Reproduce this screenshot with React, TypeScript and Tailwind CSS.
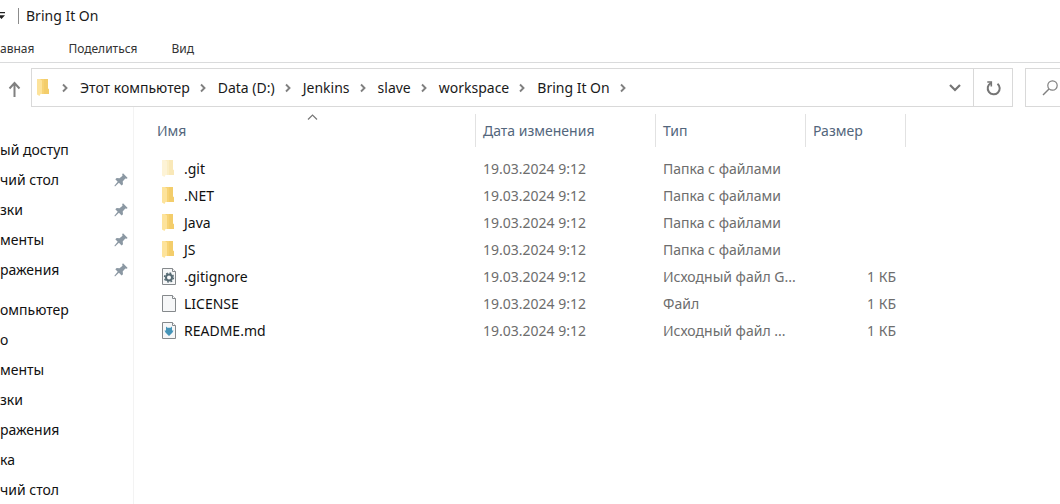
import type { ReactNode } from "react";

type Kind = "hidden" | "folder" | "gear" | "blank" | "markdown";
type Entry = { name: string; kind: Kind; type: string; size?: string };

const entries: Entry[] = [
  { name: ".git", kind: "hidden", type: "Папка с файлами" },
  { name: ".NET", kind: "folder", type: "Папка с файлами" },
  { name: "Java", kind: "folder", type: "Папка с файлами" },
  { name: "JS", kind: "folder", type: "Папка с файлами" },
  { name: ".gitignore", kind: "gear", type: "Исходный файл G...", size: "1 КБ" },
  { name: "LICENSE", kind: "blank", type: "Файл", size: "1 КБ" },
  { name: "README.md", kind: "markdown", type: "Исходный файл ...", size: "1 КБ" },
];

const crumbs = ["Этот компьютер", "Data (D:)", "Jenkins", "slave", "workspace", "Bring It On"];

const quickAccess = [
  { label: "ый доступ", pinned: false },
  { label: "чий стол", pinned: true },
  { label: "зки", pinned: true },
  { label: "менты", pinned: true },
  { label: "ражения", pinned: true },
];

const computer = ["омпьютер", "о", "менты", "зки", "ражения", "ка", "чий стол"];

function Folder({ light = false }: { light?: boolean }) {
  return (
    <svg width="14" height="18" viewBox="0 0 14 18" aria-hidden="true">
      <path d="M2 0h9v9.500l1 1V15H3z" fill={light ? "#fbeec5" : "#f7d375"} />
      <path d="M7 0h4v9.500l1 1V15H7z" fill={light ? "#f9e8b8" : "#f3cd6b"} />
      <path d="M0 0h3l2 1.500V15H3.500l-1 2L0 15.500z" fill={light ? "#fdf3d6" : "#fde39b"} />
    </svg>
  );
}

function FileIcon({ children }: { children?: ReactNode }) {
  return (
    <svg width="14" height="18" viewBox="0 0 14 18" aria-hidden="true">
      <path d="M.5.500h10l3 3v13H.5z" fill="#f6f7f8" stroke="#85898c" />
      <path d="M10.500.500v3h3" fill="#fff" stroke="#85898c" />
      {children}
    </svg>
  );
}

function EntryIcon({ kind }: { kind: Kind }) {
  if (kind === "hidden") return <Folder light />;
  if (kind === "folder") return <Folder />;
  if (kind === "blank") return <FileIcon />;
  if (kind === "gear")
    return (
      <FileIcon>
        <circle cx="7" cy="9.500" r="3" fill="none" stroke="#566a73" strokeWidth="2" />
        <circle cx="7" cy="9.500" r="4.500" fill="none" stroke="#566a73" strokeWidth="1.400" strokeDasharray="1.770 1.770" />
      </FileIcon>
    );
  return (
    <FileIcon>
      <path d="M4 4.500l1.500 1.200h3L10 4.500v4h1.500l-1 2-3.500 3.500-3.500-3.500-1-2H4z" fill="#4594b8" />
    </FileIcon>
  );
}

function Chevron() {
  return (
    <svg width="7" height="10" viewBox="0 0 7 10" fill="none" stroke="#808080" strokeWidth="1.900" aria-hidden="true">
      <path d="M1 1.500L4.500 5 1 8.500" />
    </svg>
  );
}

function Pin() {
  return (
    <svg width="14" height="14" viewBox="0 0 14 14" fill="#8b98a3" aria-hidden="true">
      <path d="M9 .3L13.700 5l-1.200.800-1.200-.3-2.600 3 .3 2.700-1.400 1.300-2.700-2.700L1 13.400l-.6-.6 3.300-4L1.300 6.300 2.700 5l2.800.3 3-2.600L8.200 1.300z" />
    </svg>
  );
}

export default function App() {
  return (
    <div className="flex h-screen flex-col overflow-hidden bg-white font-['Noto_Sans','Open_Sans',sans-serif] text-sm text-[#1a1a1a]">
      <header className="flex h-8 shrink-0 items-center">
        <button aria-label="Настройка панели быстрого доступа" className="w-[18px]">
          <svg width="5" height="8" viewBox="0 0 5 8" aria-hidden="true">
            <path d="M0 0h5v1.300H0zM0 3.300h5L1.500 7 0 5.500z" fill="#222" />
          </svg>
        </button>
        <h1 className="flex items-center gap-[7px] before:h-4 before:w-px before:bg-[#8c8c8c]">Bring It On</h1>
      </header>

      <nav className="flex h-[31px] shrink-0 items-center gap-[34px] border-b border-[#dadbdc] pt-[3px] text-xs text-[#333]">
        <button>авная</button>
        <button>Поделиться</button>
        <button>Вид</button>
      </nav>

      <div className="flex shrink-0 items-center pt-[5px]">
        <button aria-label="Вверх" className="flex w-[31px] justify-center pt-[3px] pr-0.5">
          <svg width="13" height="16" viewBox="0 0 13 16" fill="none" stroke="#808080" strokeWidth="2" aria-hidden="true">
            <path d="M6.500 16V2M1.500 7.500l5-5.500 5 5.500" />
          </svg>
        </button>
        <div className="flex h-[39px] min-w-0 flex-1 items-center border border-[#d9d9d9]">
          <div className="flex w-[27px] pl-[5px]">
            <Folder />
          </div>
          <ol className="flex flex-1 items-center gap-[11px] pl-[3px] whitespace-nowrap">
            <li className="flex">
              <Chevron />
            </li>
            {crumbs.map((c) => (
              <li key={c} className="flex items-center gap-[10px]">
                <button>{c}</button>
                <Chevron />
              </li>
            ))}
          </ol>
          <button aria-label="Предыдущие расположения" className="flex w-9 justify-center">
            <svg width="12" height="8" viewBox="0 0 12 8" fill="none" stroke="#757575" strokeWidth="2.200" aria-hidden="true">
              <path d="M1 1l5 5 5-5" />
            </svg>
          </button>
          <button aria-label="Обновить" className="flex h-full w-[39px] items-center justify-center border-l border-[#d9d9d9]">
            <svg width="16" height="16" viewBox="0 0 16 16" fill="none" stroke="#757575" strokeWidth="2" aria-hidden="true">
              <path d="M12.500 3.700A6 6 0 1 1 5.800 3.100" />
              <path d="M2.300 2h4v4.500" strokeWidth="1.600" />
            </svg>
          </button>
        </div>
        <button aria-label="Поиск" className="ml-3 flex h-[39px] w-[35px] items-center border border-r-0 border-[#d9d9d9] pl-4">
          <svg width="16" height="16" viewBox="0 0 16 16" fill="none" stroke="#808080" strokeWidth="1.200" aria-hidden="true">
            <circle cx="10.500" cy="5.500" r="4.700" />
            <path d="M7 9L1 15" strokeWidth="1.500" />
          </svg>
        </button>
      </div>

      <main className="flex min-h-0 flex-1">
        <aside className="w-[134px] shrink-0 overflow-hidden border-r border-[#f3f3f3] pt-7 text-[#111]">
          <ul className="mb-[10px]">
            {quickAccess.map((q) => (
              <li key={q.label} className="flex h-[30px] items-center justify-between pr-[5px]">
                <a href="#quick">{q.label}</a>
                {q.pinned && <Pin />}
              </li>
            ))}
          </ul>
          <ul>
            {computer.map((c) => (
              <li key={c} className="flex h-[30px] items-center">
                <a href="#pc">{c}</a>
              </li>
            ))}
          </ul>
        </aside>

        <div className="min-w-0 flex-1 pt-[7px]">
          <table className="w-[772px] table-fixed border-separate border-spacing-0 text-left whitespace-nowrap">
            <colgroup>
              <col className="w-[342px]" />
              <col className="w-[180px]" />
              <col className="w-[150px]" />
              <col className="w-[100px]" />
            </colgroup>
            <thead className="text-[#53667c]">
              <tr className="h-[33px]">
                <th className="relative border-r border-[#e2e2e2] p-0 pl-[23px] font-normal">
                  Имя
                  <svg className="absolute top-0 left-[173px]" width="11" height="6" viewBox="0 0 11 6" fill="none" stroke="#777" strokeWidth="1.200" aria-hidden="true">
                    <path d="M1 5.500L5.500 1 10 5.500" />
                  </svg>
                </th>
                <th className="border-r border-[#e2e2e2] p-0 pl-[7px] font-normal">Дата изменения</th>
                <th className="border-r border-[#e2e2e2] p-0 pl-[7px] font-normal">Тип</th>
                <th className="border-r border-[#e2e2e2] p-0 pl-[7px] font-normal">Размер</th>
              </tr>
            </thead>
            <tbody className="text-[#6d6d6d] before:block before:h-2">
              {entries.map((e) => (
                <tr key={e.name} className="h-[27px]">
                  <td className="p-0 pl-7 text-[#111]">
                    <div className="flex items-center gap-2">
                      <EntryIcon kind={e.kind} />
                      {e.name}
                    </div>
                  </td>
                  <td className="p-0 pl-[7px]">19.03.2024 9:12</td>
                  <td className="p-0 pl-[7px]">{e.type}</td>
                  <td className="p-0 pr-[10px] text-right">{e.size}</td>
                </tr>
              ))}
            </tbody>
          </table>
        </div>
      </main>
    </div>
  );
}
